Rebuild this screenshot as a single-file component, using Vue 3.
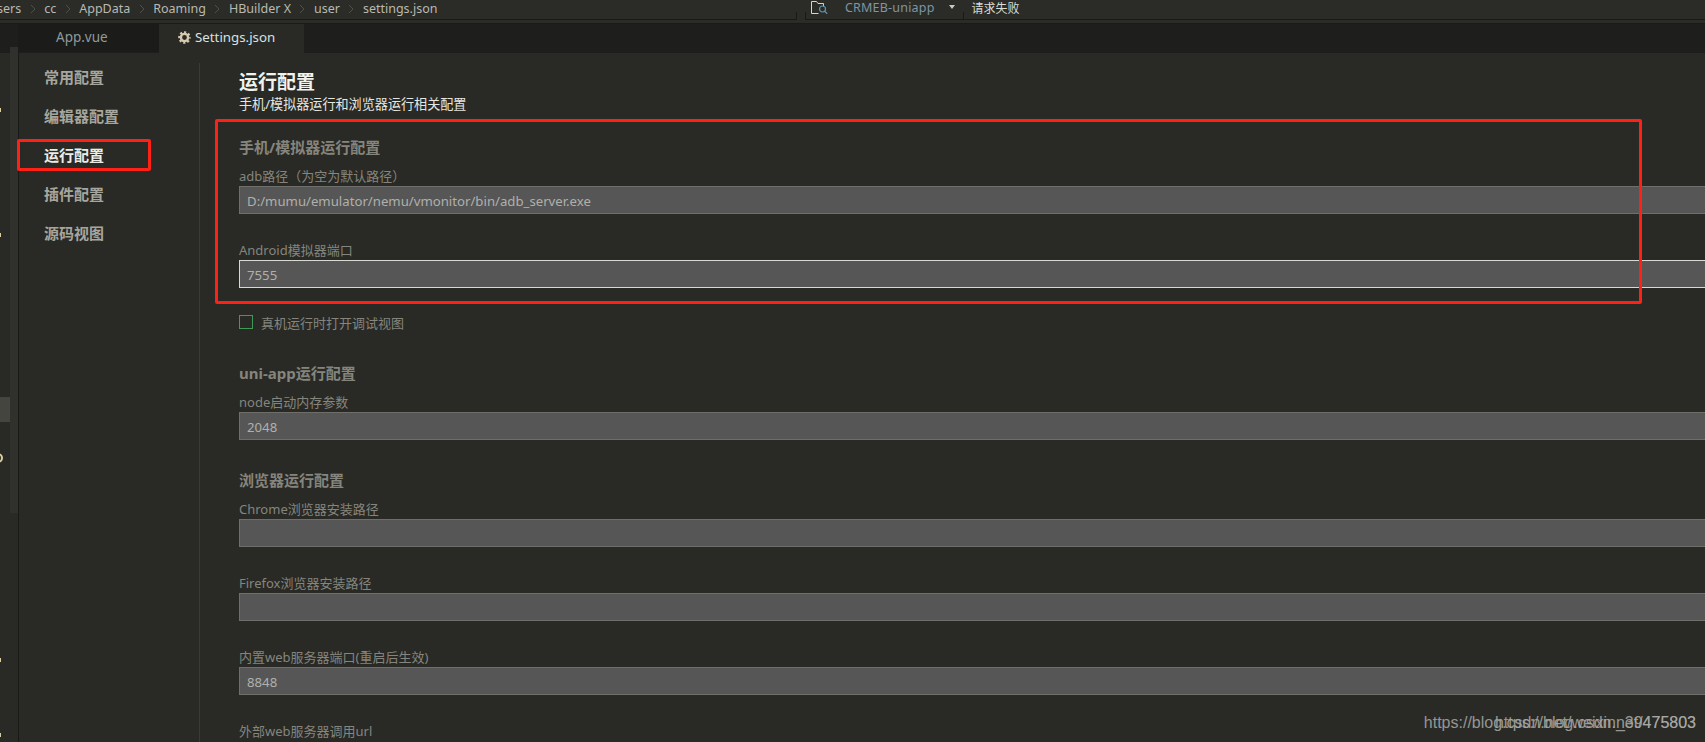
<script setup>
const crumbs = ['sers', 'cc', 'AppData', 'Roaming', 'HBuilder X', 'user', 'settings.json']
const menu = ['常用配置', '编辑器配置', '运行配置', '插件配置', '源码视图']
const dots = [108, 233, 658, 733]
const ticks = [796, 805, 963]
</script>

<template>
  <div class="app">
    <header class="topbar">
      <nav class="crumbs">
        <template v-for="(c, i) in crumbs" :key="c">
          <span class="crumb">{{ c }}</span>
          <svg v-if="i < crumbs.length - 1" class="chev" width="6" height="10" viewBox="0 0 6 10"><path d="M1 1l4 4-4 4" fill="none" stroke="#4e4f49" stroke-width="1"/></svg>
        </template>
      </nav>
      <i class="rule rule-a"></i>
      <i class="rule rule-b"></i>
      <i v-for="x in ticks" :key="x" class="tick" :style="{ left: x + 'px' }"></i>
      <div class="tools">
        <svg class="folder" width="17" height="13" viewBox="0 0 17 13">
          <path d="M.5 12.500V.5h5l1.500 2h5.500v3M.5 12.500h7" fill="none" stroke="#d5d5cf" stroke-width="1"/>
          <circle cx="11.500" cy="8" r="3" fill="none" stroke="#5f93ad" stroke-width="1.200"/>
          <path d="M13.700 10.200l2.500 2.500" stroke="#5f93ad" stroke-width="1.300"/>
        </svg>
        <span class="project">CRMEB-uniapp</span>
        <span class="arrow"></span>
        <span class="status">请求失败</span>
      </div>
    </header>

    <div class="tabs">
      <div class="tab">App.vue</div>
      <div class="tab active">
        <svg class="gear" width="13" height="13" viewBox="0 0 13 13">
          <circle cx="6.500" cy="6.500" r="3.600" fill="none" stroke="#d6c9ae" stroke-width="2.400"/>
          <circle cx="6.500" cy="6.500" r="5.300" fill="none" stroke="#d6c9ae" stroke-width="2" stroke-dasharray="2.160 2" stroke-dashoffset="1.080"/>
        </svg>
        Settings.json
      </div>
    </div>

    <main class="body">
      <aside class="strip">
        <div class="rail"></div>
      </aside>
      <ul class="menu">
        <li v-for="m in menu" :key="m" :class="{ on: m === '运行配置' }">{{ m }}</li>
      </ul>
      <section class="content">
        <h1>运行配置</h1>
        <p class="sub">手机/模拟器运行和浏览器运行相关配置</p>

        <h2 class="first">手机/模拟器运行配置</h2>
        <label class="lbl">adb路径（为空为默认路径）</label>
        <div class="input">D:/mumu/emulator/nemu/vmonitor/bin/adb_server.exe</div>
        <label class="lbl gap">Android模拟器端口</label>
        <div class="input focus">7555</div>

        <div class="check"><span class="box"></span>真机运行时打开调试视图</div>

        <h2 class="uni">uni-app运行配置</h2>
        <label class="lbl">node启动内存参数</label>
        <div class="input">2048</div>

        <h2 class="browser">浏览器运行配置</h2>
        <label class="lbl">Chrome浏览器安装路径</label>
        <div class="input"></div>
        <label class="lbl gap">Firefox浏览器安装路径</label>
        <div class="input"></div>
        <label class="lbl gap">内置web服务器端口(重启后生效)</label>
        <div class="input">8848</div>
        <label class="lbl gap">外部web服务器调用url</label>
      </section>
    </main>

    <i v-for="y in dots" :key="y" class="dot" :style="{ top: y + 'px' }"></i>
    <i class="thumb"></i>
    <i class="ring"></i>
    <i class="redbox small"></i>
    <i class="redbox large"></i>
    <div class="mark mark-a">https://blog.csdn.net/weixin_39475803</div>
    <div class="mark mark-b">https://blog.csdn.net/475803</div>
  </div>
</template>

<style>
html, body { margin: 0; background: #292a25; }
</style>

<style scoped>
.app {
  position: relative;
  width: 1705px;
  height: 742px;
  overflow: hidden;
  display: flex;
  flex-direction: column;
  background: #292a25;
  font-family: "Noto Sans", "Noto Sans CJK SC", sans-serif;
  color: #8d8d86;
}
.topbar {
  height: 24px;
  flex: none;
  box-sizing: border-box;
  border-bottom: 1px solid #1a1b18;
  background: #2b2c27;
  position: relative;
}
.crumbs {
  margin-left: -3px;
  height: 17px;
  display: flex;
  align-items: center;
  gap: 8.500px;
  font-size: 12.500px;
  color: #b9b9b2;
  white-space: nowrap;
}
.chev { flex: none; }
.rule {
  position: absolute;
  top: 19px;
  border-top: 1px solid #191a17;
}
.rule-a { left: 0; width: 797px; }
.rule-b { left: 805px; right: 0; }
.tick {
  position: absolute;
  top: 12px;
  height: 7px;
  border-left: 1px solid #191a17;
}
.tools {
  position: absolute;
  left: 805px;
  top: 0;
  height: 19px;
  display: flex;
  align-items: flex-start;
  font-size: 12.500px;
  white-space: nowrap;
}
.folder { margin: 1px 0 0 6px; flex: none; }
.project { margin-left: 17px; color: #7e95a3; line-height: 15px; letter-spacing: .2px; }
.arrow {
  margin: 5px 0 0 14px;
  border: 3px solid transparent;
  border-top: 4px solid #c9c9c4;
  border-bottom: 0;
}
.status { margin: 1px 0 0 17px; color: #dcdcd2; font-size: 12px; line-height: 15px; }
.tabs {
  height: 29px;
  flex: none;
  padding-left: 18px;
  box-sizing: border-box;
  background: #1e1f1c;
  display: flex;
  align-items: flex-start;
}
.tab {
  width: 141px;
  height: 28px;
  box-sizing: border-box;
  padding-left: 38px;
  font-size: 13.500px;
  line-height: 27px;
  color: #8f9a9b;
  background: #1b1c19;
}
.tab.active {
  width: 145px;
  height: 29px;
  padding: 0 0 2px 19px;
  background: #292a25;
  color: #d8e0e4;
  font-size: 13.300px;
  display: flex;
  align-items: center;
  gap: 4px;
}
.gear { flex: none; }
.body {
  flex: 1;
  display: flex;
  min-height: 0;
}
.strip {
  width: 18px;
  flex: none;
  display: flex;
  justify-content: flex-end;
  border-right: 1px solid #191a17;
}
.rail {
  width: 8px;
  height: 466px;
  margin-top: -6px;
  background: #30312c;
}
.menu {
  list-style: none;
  margin: 10px 0 0;
  padding: 2px 0 0 25px;
  width: 181px;
  box-sizing: border-box;
  border-right: 1px solid #3a3b36;
  font-size: 15px;
  font-weight: 700;
  color: #a6a69f;
}
.menu li {
  height: 39px;
  line-height: 24px;
}
.menu li.on { color: #ecece6; }
.content {
  flex: 1;
  padding-left: 39px;
  min-width: 0;
  margin-top: 10px;
}
h1 {
  margin: 6px 0 0;
  color: #f2f2ec;
  font-size: 19px;
  line-height: 26px;
  font-weight: 700;
}
.sub {
  margin: 0;
  color: #e6e6e0;
  font-size: 13.100px;
  line-height: 18px;
}
h2 {
  margin: 0;
  font-size: 15px;
  line-height: 22px;
  font-weight: 700;
  color: #85857e;
}
h2.first { margin-top: 23px; }
h2.uni { margin-top: 31px; }
h2.browser { margin-top: 29px; }
.lbl {
  display: block;
  margin-top: 8px;
  font-size: 13px;
  line-height: 20px;
  color: #85857e;
  white-space: nowrap;
}
.lbl.gap { margin-top: 26px; }
.input {
  height: 28px;
  box-sizing: border-box;
  border: 1px solid #6e6e6a;
  border-right: 0;
  background: #565656;
  padding-left: 7px;
  font-size: 13.200px;
  line-height: 28px;
  color: #b0b0ab;
  white-space: nowrap;
}
.input.focus { border-color: #d8d8d4; }
.check {
  margin-top: 25px;
  display: flex;
  align-items: center;
  gap: 8px;
  height: 18px;
  font-size: 13px;
  color: #85857e;
}
.box {
  width: 14px;
  height: 14px;
  box-sizing: border-box;
  border: 1px solid #3f9a58;
  flex: none;
}
.dot {
  position: absolute;
  left: 0;
  width: 1px;
  height: 4px;
  background: #d8cf9e;
}
.thumb {
  position: absolute;
  left: 0;
  top: 397px;
  width: 10px;
  height: 25px;
  background: #44453f;
}
.ring {
  position: absolute;
  left: -7px;
  top: 453px;
  width: 10px;
  height: 10px;
  box-sizing: border-box;
  border: 2px solid #d8cf9e;
  border-radius: 50%;
}
.redbox {
  position: absolute;
  box-sizing: border-box;
  border: 3px solid #ff2116;
  border-radius: 2px;
}
.redbox.small { left: 17px; top: 139px; width: 134px; height: 32px; }
.redbox.large { left: 215px; top: 119px; width: 1427px; height: 185px; }
.mark {
  position: absolute;
  top: 713px;
  font-family: "Liberation Sans", sans-serif;
  font-size: 16px;
  line-height: 20px;
  color: #a9a9a5;
  white-space: nowrap;
  opacity: .85;
}
.mark-a { right: 9px; }
.mark-b { right: 9px; }
</style>
